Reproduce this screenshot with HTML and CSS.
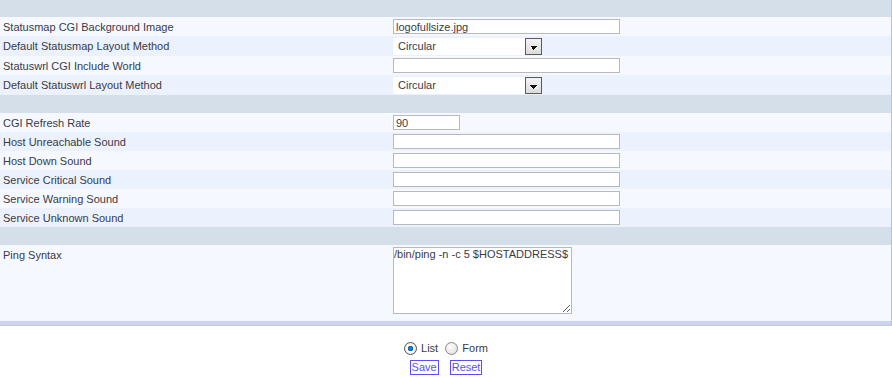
FILE: index.html
```html
<!DOCTYPE html>
<html lang="en">
<head>
  <meta charset="UTF-8">
  <title>CGI Settings</title>
  <link rel="stylesheet" href="styles.css">
</head>
<body>
  <form class="settings">
    <table class="grid">
      <tr class="sep"><td colspan="2"></td></tr>
      <tr class="odd">
        <td class="label">Statusmap CGI Background Image</td>
        <td><input class="text wide" type="text" value="logofullsize.jpg"></td>
      </tr>
      <tr class="even tall">
        <td class="label">Default Statusmap Layout Method</td>
        <td><span class="select"><select><option>Circular</option></select></span></td>
      </tr>
      <tr class="odd">
        <td class="label">Statuswrl CGI Include World</td>
        <td><input class="text wide" type="text"></td>
      </tr>
      <tr class="even tall">
        <td class="label">Default Statuswrl Layout Method</td>
        <td><span class="select"><select><option>Circular</option></select></span></td>
      </tr>
      <tr class="sep gap"><td colspan="2"></td></tr>
      <tr class="odd">
        <td class="label">CGI Refresh Rate</td>
        <td><input class="text short" type="text" value="90"></td>
      </tr>
      <tr class="even">
        <td class="label">Host Unreachable Sound</td>
        <td><input class="text wide" type="text"></td>
      </tr>
      <tr class="odd">
        <td class="label">Host Down Sound</td>
        <td><input class="text wide" type="text"></td>
      </tr>
      <tr class="even">
        <td class="label">Service Critical Sound</td>
        <td><input class="text wide" type="text"></td>
      </tr>
      <tr class="odd">
        <td class="label">Service Warning Sound</td>
        <td><input class="text wide" type="text"></td>
      </tr>
      <tr class="even">
        <td class="label">Service Unknown Sound</td>
        <td><input class="text wide" type="text"></td>
      </tr>
      <tr class="sep gap"><td colspan="2"></td></tr>
      <tr class="odd block">
        <td class="label top">Ping Syntax</td>
        <td class="top"><textarea class="area">/bin/ping -n -c 5 $HOSTADDRESS$</textarea></td>
      </tr>
      <tr class="foot"><td colspan="2"></td></tr>
    </table>

    <div class="mode">
      <label><input type="radio" name="mode" checked> List</label>
      <label><input type="radio" name="mode"> Form</label>
    </div>
    <div class="actions">
      <button type="button" class="btn">Save</button>
      <button type="reset" class="btn">Reset</button>
    </div>
  </form>
</body>
</html>
```

FILE: styles.css
```css
body {
  margin: 0;
  font-family: "Liberation Sans", Arial, sans-serif;
  font-size: 11px;
  color: #3a3a44;
  background: #ffffff;
}

.grid {
  width: 892px;
  border-collapse: collapse;
  border-right: 1px solid #b7c2d2;
}
.grid td {
  padding: 0;
  height: 19px;
  vertical-align: middle;
}
.grid tr.tall td {
  height: 20px;
}
.grid .label {
  width: 390px;
  padding-left: 3px;
}
.grid td.top {
  vertical-align: top;
  padding-top: 2px;
}
.grid .label.top {
  padding-top: 4px;
}

.sep td {
  height: 17px;
  background: #d5dfea;
}
.sep.gap td {
  height: 18px;
}
.odd td {
  background: #f5f9ff;
}
.even td {
  background: #ebf2fe;
}
.block td {
  height: 72px;
}
.foot td {
  height: 4px;
  background: #ccd3ec;
  border-bottom: 1px solid #c2c9dc;
}

.text {
  box-sizing: border-box;
  height: 15px;
  margin: 0;
  padding: 0 2px;
  border: 1px solid #b9b9b9;
  background: #ffffff;
  font: 11px "Liberation Sans", Arial, sans-serif;
  color: #3a3a44;
  vertical-align: middle;
}
.wide {
  width: 227px;
}
.short {
  width: 67px;
}

/* old style drop-down */
.select {
  position: relative;
  display: inline-block;
  width: 149px;
  height: 17px;
  vertical-align: middle;
}
.select select {
  appearance: none;
  box-sizing: border-box;
  width: 100%;
  height: 17px;
  margin: 0;
  padding: 0 0 0 5px;
  border: none;
  background: #ffffff;
  font: 11px "Liberation Sans", Arial, sans-serif;
  color: #3a3a44;
}
.select::after {
  content: "";
  position: absolute;
  top: 0;
  right: 0;
  box-sizing: border-box;
  width: 17px;
  height: 17px;
  border: 1px solid #5a5a5a;
  background:
    linear-gradient(135deg, transparent 50%, #ededed 50%) no-repeat 8px 7px / 4px 4px,
    linear-gradient(225deg, transparent 50%, #ededed 50%) no-repeat 4px 7px / 4px 4px,
    linear-gradient(#111111, #111111) no-repeat 4px 7px / 8px 4px,
    linear-gradient(#f4f4f4, #dcdcdc);
  pointer-events: none;
}

.area {
  box-sizing: border-box;
  width: 179px;
  height: 67px;
  margin: 0;
  padding: 0;
  border: 1px solid #b9b9b9;
  font: 11px "Liberation Sans", Arial, sans-serif;
  color: #3a3a44;
  resize: both;
}

.mode {
  margin-top: 16px;
  text-align: center;
  font-size: 11px;
  line-height: 13px;
}
.mode label {
  margin: 0 2px;
}
.mode input {
  appearance: none;
  box-sizing: border-box;
  width: 13px;
  height: 13px;
  margin: 0 1px 0 0;
  vertical-align: -3px;
  border: 1px solid #8a8a8a;
  border-radius: 50%;
  background: radial-gradient(circle at 40% 35%, #ffffff, #d8d8d8);
}
.mode input:checked {
  background: radial-gradient(circle, #2a8fd6 0, #0b5ea8 2.5px, #ffffff 3px, #dcdcdc 100%);
  border-color: #555555;
}

.actions {
  margin-top: 5px;
  text-align: center;
}
.btn {
  height: 15px;
  margin: 0 4px;
  padding: 0 1px;
  border: 1px solid #5a4ff0;
  background: #ffffff;
  color: #5a4ff0;
  font: 11px "Liberation Sans", Arial, sans-serif;
  line-height: 13px;
  cursor: pointer;
}
```
